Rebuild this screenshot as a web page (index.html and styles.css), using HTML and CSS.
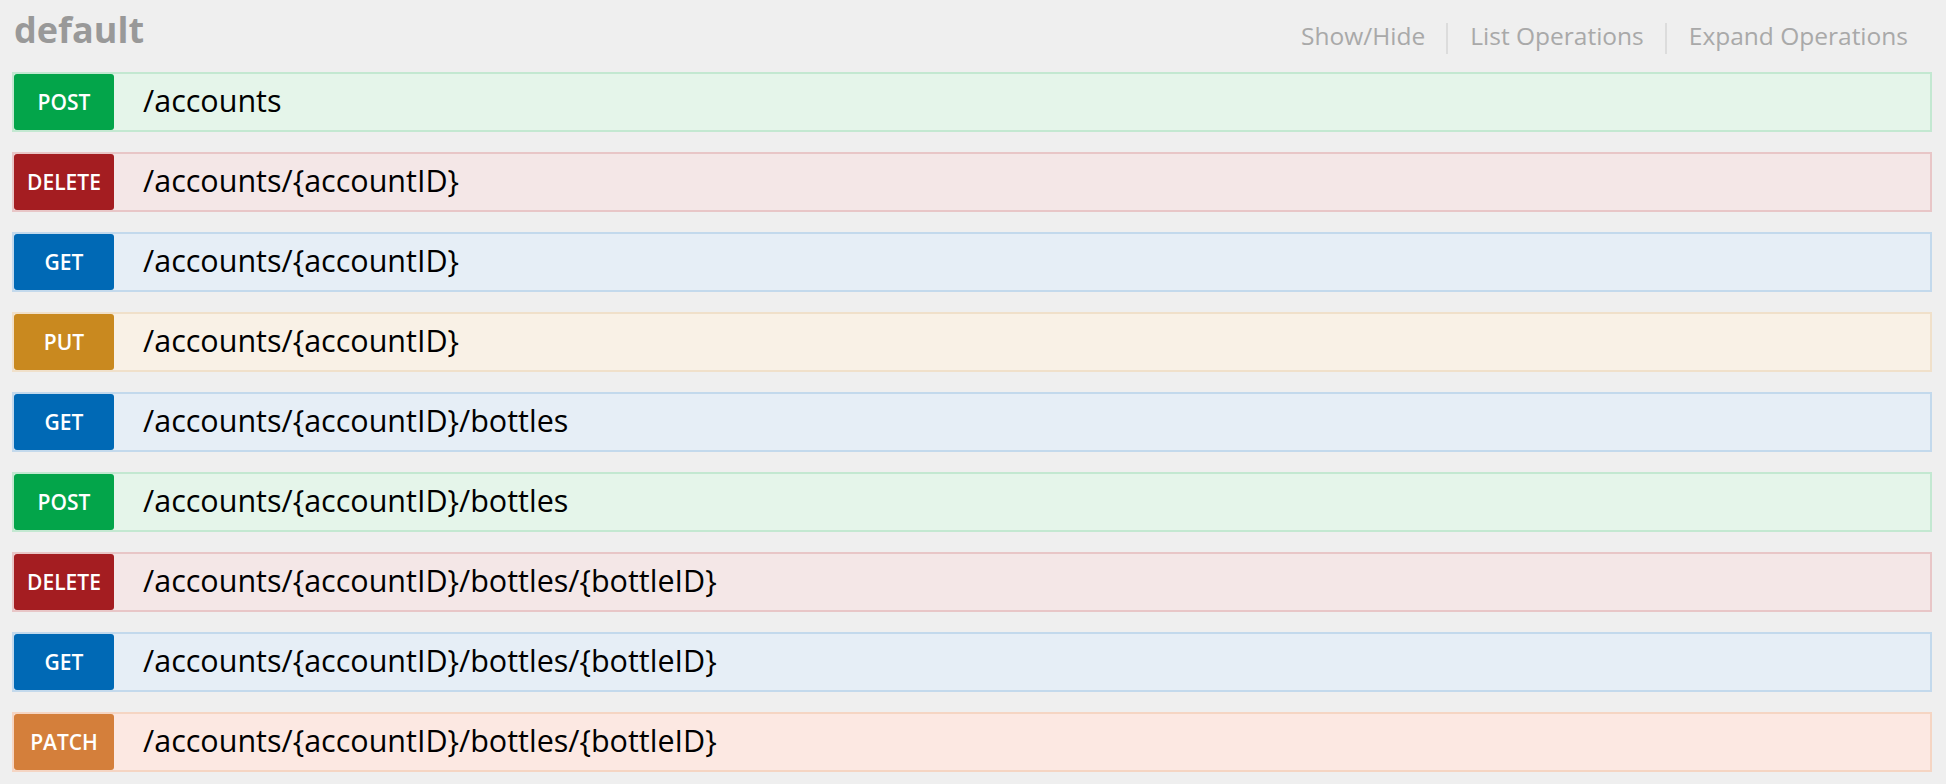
FILE: index.html
```html
<!DOCTYPE html>
<html>
<head>
<meta charset="utf-8">
<link rel="stylesheet" href="styles.css">
</head>
<body>
<div class="resource">
  <div class="heading">
    <h2 class="title">default</h2>
    <ul class="options">
      <li class="option"><a class="option-link">Show/Hide</a></li>
      <li class="option"><a class="option-link">List Operations</a></li>
      <li class="option last"><a class="option-link">Expand Operations</a></li>
    </ul>
  </div>
  <ul class="endpoints">
    <li class="op post"><span class="method">POST</span><span class="path">/accounts</span></li>
    <li class="op delete"><span class="method">DELETE</span><span class="path">/accounts/{accountID}</span></li>
    <li class="op get"><span class="method">GET</span><span class="path">/accounts/{accountID}</span></li>
    <li class="op put"><span class="method">PUT</span><span class="path">/accounts/{accountID}</span></li>
    <li class="op get"><span class="method">GET</span><span class="path">/accounts/{accountID}/bottles</span></li>
    <li class="op post"><span class="method">POST</span><span class="path">/accounts/{accountID}/bottles</span></li>
    <li class="op delete"><span class="method">DELETE</span><span class="path">/accounts/{accountID}/bottles/{bottleID}</span></li>
    <li class="op get"><span class="method">GET</span><span class="path">/accounts/{accountID}/bottles/{bottleID}</span></li>
    <li class="op patch"><span class="method">PATCH</span><span class="path">/accounts/{accountID}/bottles/{bottleID}</span></li>
  </ul>
</div>
</body>
</html>
```
FILE: styles.css
```css
html, body {
  margin: 0;
  padding: 0;
  background: #efefef;
  font-family: "Open Sans", "Noto Sans", sans-serif;
}
.resource {
  width: 1920px;
  margin-left: 12px;
}
.heading {
  display: flex;
  justify-content: space-between;
  align-items: flex-start;
  height: 72px;
  box-sizing: border-box;
  padding-top: 5px;
}
.title {
  margin: 0 0 0 2px;
  font-size: 36px;
  font-weight: 700;
  color: #999;
}
.options {
  display: flex;
  list-style: none;
  margin: 18px 0 0 0;
  padding: 0;
}
.option {
  font-size: 24.5px;
  line-height: 25px;
  padding: 0 21px 6px 22px;
  border-right: 2px solid #dcdcdc;
}
.option.last {
  border-right: none;
  padding-right: 24px;
}
.option-link {
  color: #a9a9a9;
}
.endpoints {
  list-style: none;
  margin: 0;
  padding: 0;
  display: flex;
  flex-direction: column;
  gap: 20px;
}
.op {
  display: flex;
  align-items: center;
  height: 60px;
  box-sizing: border-box;
  border: 2px solid;
}
.method {
  width: 100px;
  height: 56px;
  display: flex;
  align-items: center;
  justify-content: center;
  border-radius: 3px;
  color: #fff;
  font-size: 21px;
  font-weight: 600;
}
.path {
  padding-left: 29px;
  padding-bottom: 5px;
  font-size: 30.5px;
  color: #000;
}
.post { background: #e5f5ea; border-color: #c3e8d1; }
.post .method { background: #03a54a; }
.delete { background: #f4e7e7; border-color: #e8c6c7; }
.delete .method { background: #a41d21; }
.get { background: #e6eef6; border-color: #c3d9ec; }
.get .method { background: #0069b5; }
.put { background: #f9f1e6; border-color: #f0e0ca; }
.put .method { background: #c9891f; }
.patch { background: #fce8e2; border-color: #f5d5c3; }
.patch .method { background: #d47f3b; }
```
